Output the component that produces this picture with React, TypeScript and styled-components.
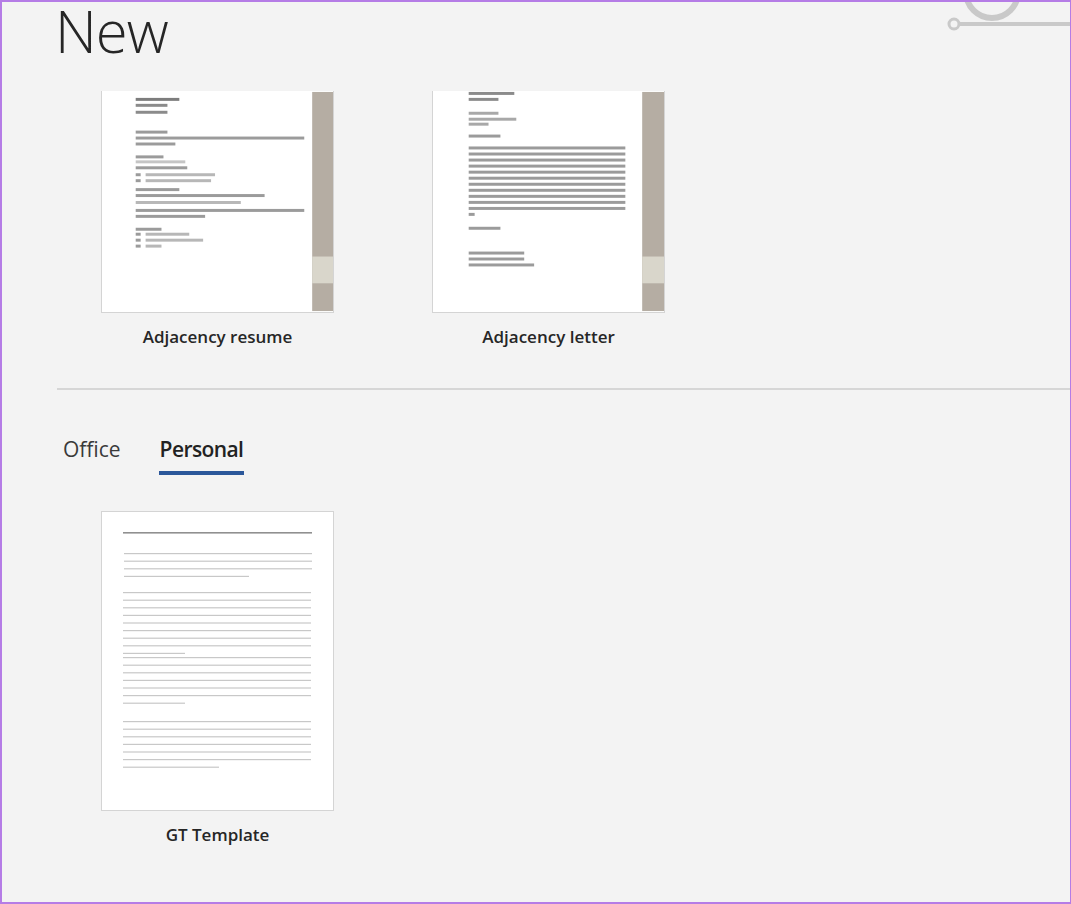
import React from "react";
import styled, { createGlobalStyle } from "styled-components";

const Global = createGlobalStyle`
  html, body { margin: 0; padding: 0; background: #f3f3f3; }
  body { font-family: "Open Sans", "Noto Sans", sans-serif; color: #252525; }
`;

const Frame = styled.div`
  position: relative;
  width: 1071px;
  height: 904px;
  box-sizing: border-box;
  border: 2px solid #b57ce6;
  border-right-width: 1px;
  background: #f3f3f3;
  overflow: hidden;
  padding-left: 53px;
`;

const Deco = styled.svg`
  position: absolute;
  top: 0;
  right: 0;
`;

const Title = styled.h1`
  margin: 0;
  height: 89px;
  font-family: "Open Sans", sans-serif;
  font-weight: 300;
  font-size: 58px;
  line-height: 58px;
  letter-spacing: -1px;
  color: #262626;
`;

const Row = styled.div`
  display: flex;
  gap: 98px;
  padding-left: 46px;
`;

const Item = styled.div`
  display: flex;
  flex-direction: column;
  align-items: center;
  width: 233px;
`;

const Thumb = styled.div<{ $h: number; $top?: boolean }>`
  width: 233px;
  height: ${(p) => p.$h}px;
  box-sizing: border-box;
  background: #fff;
  border: 1px solid #d4d4d4;
  border-top-width: ${(p) => (p.$top ? 1 : 0)}px;
  position: relative;
  overflow: hidden;
  display: flex;
`;

const Label = styled.div`
  margin-top: 12px;
  font-size: 17px;
  font-weight: 600;
  color: #262626;
`;

const Divider = styled.hr`
  margin: 40px 0 0 2px;
  border: 0;
  border-top: 2px solid #d6d6d6;
`;

const Tabs = styled.div`
  display: flex;
  gap: 38px;
  margin: 45px 0 0 8px;
`;

const Tab = styled.div<{ $active?: boolean }>`
  font-size: 21px;
  font-weight: ${(p) => (p.$active ? 600 : 400)};
  letter-spacing: ${(p) => (p.$active ? "-0.6px" : "0")};
  color: ${(p) => (p.$active ? "#222" : "#3a3a3a")};
  padding-bottom: 8px;
  border-bottom: 4px solid ${(p) => (p.$active ? "#2b579a" : "transparent")};
  line-height: 28px;
  padding-left: ${(p) => (p.$active ? "1px" : "0")};
  padding-right: ${(p) => (p.$active ? "1px" : "0")};
`;

const Second = styled(Row)`
  margin-top: 36px;
`;

const dots = (x: number, y: number, w: number, c = "#8a8a8a", h = 3) => (
  <rect x={x} y={y} width={w} height={h} fill={c} opacity={0.85} />
);

const Resume = () => (
  <svg width="233" height="221" viewBox="0 0 233 221">
    <rect x="212" y="0" width="21" height="221" fill="#b5ada3" />
    <rect x="212" y="166" width="21" height="27" fill="#d9d6cb" />
    {dots(34, 6, 44, "#666")}
    {dots(34, 12, 32, "#777")}
    {dots(34, 19, 32, "#777")}
    {dots(34, 39, 32)}
    {dots(34, 45, 170)}
    {dots(34, 51, 40)}
    {dots(34, 64, 28)}
    {dots(34, 69, 50, "#bbb")}
    {dots(34, 75, 52)}
    {dots(34, 82, 5)}{dots(44, 82, 70, "#aaa")}
    {dots(34, 88, 5)}{dots(44, 88, 66, "#aaa")}
    {dots(34, 97, 44)}
    {dots(34, 103, 130)}
    {dots(34, 110, 106, "#aaa")}
    {dots(34, 118, 170)}
    {dots(34, 124, 70)}
    {dots(34, 137, 26)}
    {dots(34, 142, 5)}{dots(44, 142, 44, "#aaa")}
    {dots(34, 148, 5)}{dots(44, 148, 58, "#aaa")}
    {dots(34, 154, 5)}{dots(44, 154, 16, "#aaa")}
  </svg>
);

const Letter = () => (
  <svg width="233" height="221" viewBox="0 0 233 221">
    <rect x="211" y="0" width="22" height="221" fill="#b5ada3" />
    <rect x="211" y="166" width="22" height="27" fill="#d9d6cb" />
    {dots(36, 0, 46, "#777")}
    {dots(36, 6, 30, "#777")}
    {dots(36, 20, 30, "#999")}
    {dots(36, 26, 48, "#999")}
    {dots(36, 31, 20, "#999")}
    {dots(36, 43, 32)}
    {Array.from({ length: 11 }, (_, i) => dots(36, 55 + i * 6.1, 158))}
    {dots(36, 122, 6)}
    {dots(36, 136, 32)}
    {dots(36, 161, 56)}
    {dots(36, 167, 56)}
    {dots(36, 173, 66)}
  </svg>
);

const para = (start: number, n: number, lastW: number, x = 22) =>
  Array.from({ length: n }, (_, i) => (
    <rect key={start + i} x={x} y={start + i * 7.6} width={i === n - 1 ? lastW : 188} height={1.2} fill="#c8c8c8" />
  ));

const GT = () => (
  <svg width="231" height="298" viewBox="0 0 231 298">
    <rect x="21" y="20" width="189" height="1.6" fill="#909090" />
    {para(41, 4, 125)}
    {para(80, 9, 62, 21)}
    {para(145, 7, 62, 21)}
    {para(209, 7, 96, 21)}
  </svg>
);

export default function App() {
  return (
    <Frame>
      <Global />
      <Deco width="124" height="32" viewBox="0 0 124 32">
        <circle cx="46" cy="-10" r="26" fill="none" stroke="#c9c9c9" strokeWidth="6" />
        <circle cx="8" cy="22" r="5" fill="none" stroke="#c9c9c9" strokeWidth="3" />
        <rect x="13" y="20" width="111" height="4" fill="#c9c9c9" />
      </Deco>
      <Title>New</Title>
      <Row>
        <Item>
          <Thumb $h={222}><Resume /></Thumb>
          <Label>Adjacency resume</Label>
        </Item>
        <Item>
          <Thumb $h={222}><Letter /></Thumb>
          <Label>Adjacency letter</Label>
        </Item>
      </Row>
      <Divider />
      <Tabs>
        <Tab>Office</Tab>
        <Tab $active>Personal</Tab>
      </Tabs>
      <Second>
        <Item>
          <Thumb $h={300} $top><GT /></Thumb>
          <Label>GT Template</Label>
        </Item>
      </Second>
    </Frame>
  );
}
